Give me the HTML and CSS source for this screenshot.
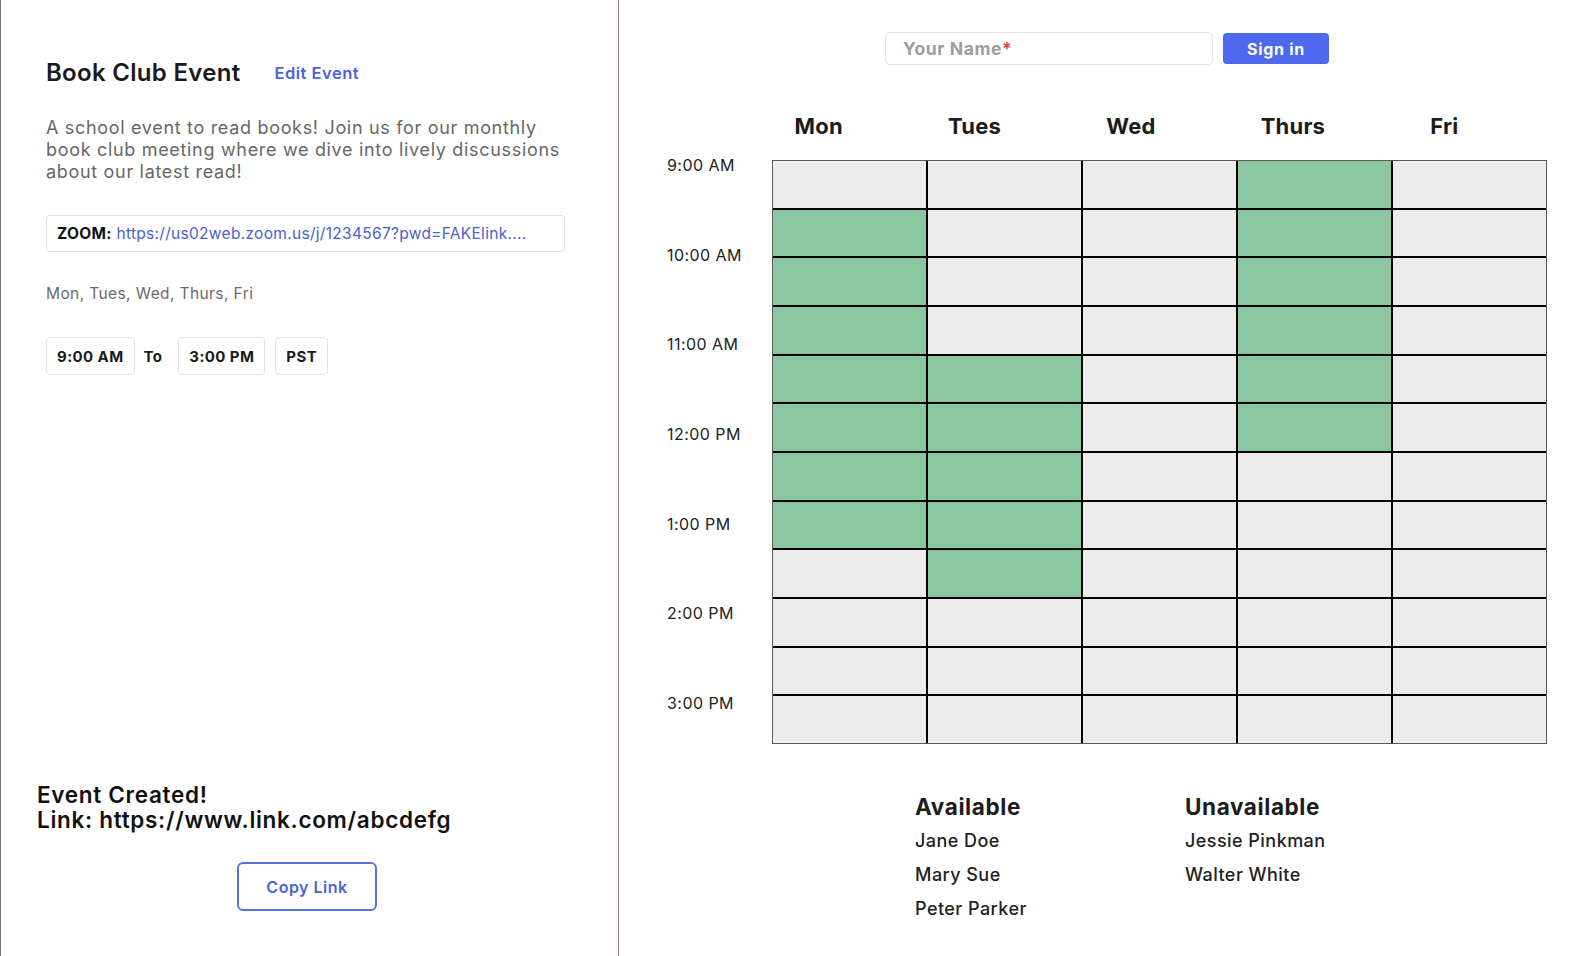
FILE: index.html
```html
<!DOCTYPE html>
<html lang="en">
<head>
<meta charset="utf-8">
<title>Book Club Event</title>
<link rel="stylesheet" href="styles.css">
</head>
<body>
<div class="page">
  <aside class="left">
    <div class="title-row">
      <h1 class="title">Book Club Event</h1>
      <a class="edit" href="#">Edit Event</a>
    </div>
    <p class="desc">A school event to read books! Join us for our monthly book club meeting where we dive into lively discussions about our latest read!</p>
    <div class="zoom"><b>ZOOM:</b>&nbsp;<a href="#">https://us02web.zoom.us/j/1234567?pwd=FAKElink....</a></div>
    <p class="days">Mon, Tues, Wed, Thurs, Fri</p>
    <div class="times">
      <span class="tbox">9:00 AM</span>
      <span class="to">To</span>
      <span class="tbox">3:00 PM</span>
      <span class="tbox">PST</span>
    </div>
    <div class="created">
      <p class="created-text">Event Created!<br>Link: https://www.link.com/abcdefg</p>
      <button class="copy">Copy Link</button>
    </div>
  </aside>
  <main class="right">
    <div class="signin">
      <div class="name-input">Your Name<span class="req">*</span></div>
      <button class="signin-btn">Sign in</button>
    </div>
    <div class="day-head">
      <span>Mon</span><span>Tues</span><span>Wed</span><span>Thurs</span><span>Fri</span>
    </div>
    <div class="schedule">
      <div class="hours">
        <span>9:00 AM</span><span>10:00 AM</span><span>11:00 AM</span><span>12:00 PM</span><span>1:00 PM</span><span>2:00 PM</span><span>3:00 PM</span>
      </div>
      <div class="grid">
        <div class="c"></div><div class="c"></div><div class="c"></div><div class="c g"></div><div class="c"></div>
        <div class="c g"></div><div class="c"></div><div class="c"></div><div class="c g"></div><div class="c"></div>
        <div class="c g"></div><div class="c"></div><div class="c"></div><div class="c g"></div><div class="c"></div>
        <div class="c g"></div><div class="c"></div><div class="c"></div><div class="c g"></div><div class="c"></div>
        <div class="c g"></div><div class="c g"></div><div class="c"></div><div class="c g"></div><div class="c"></div>
        <div class="c g"></div><div class="c g"></div><div class="c"></div><div class="c g"></div><div class="c"></div>
        <div class="c g"></div><div class="c g"></div><div class="c"></div><div class="c"></div><div class="c"></div>
        <div class="c g"></div><div class="c g"></div><div class="c"></div><div class="c"></div><div class="c"></div>
        <div class="c"></div><div class="c g"></div><div class="c"></div><div class="c"></div><div class="c"></div>
        <div class="c"></div><div class="c"></div><div class="c"></div><div class="c"></div><div class="c"></div>
        <div class="c"></div><div class="c"></div><div class="c"></div><div class="c"></div><div class="c"></div>
        <div class="c"></div><div class="c"></div><div class="c"></div><div class="c"></div><div class="c"></div>
      </div>
    </div>
    <div class="people">
      <div class="plist">
        <h2>Available</h2>
        <p>Jane Doe</p>
        <p>Mary Sue</p>
        <p>Peter Parker</p>
      </div>
      <div class="plist">
        <h2>Unavailable</h2>
        <p>Jessie Pinkman</p>
        <p>Walter White</p>
      </div>
    </div>
  </main>
</div>
</body>
</html>
```
FILE: styles.css
```css
* { box-sizing: border-box; }
html, body { margin: 0; padding: 0; background: #fff; }
body {
  font-family: Inter, "Open Sans", "Liberation Sans", sans-serif;
  color: #1c1c1c;
}
p, h1, h2 { margin: 0; }
a { text-decoration: none; }
button { font-family: inherit; cursor: pointer; }

.page {
  display: flex;
  width: 1592px;
  height: 956px;
}

/* ---------- left panel ---------- */
.left {
  width: 619px;
  flex: none;
  border-left: 1px solid #7a7a7a;
  border-right: 1px solid #a27676;
  display: flex;
  flex-direction: column;
  padding: 58px 0 45px 45px;
}
.title-row {
  display: flex;
  align-items: center;
  gap: 34px;
}
.title {
  font-size: 24px;
  line-height: 29px;
  font-weight: 600;
  color: #1a1a1a;
  letter-spacing: 0.3px;
}
.edit {
  font-size: 16.5px;
  font-weight: 600;
  letter-spacing: 0.5px;
  color: #4a63dc;
}
.desc {
  margin-top: 30px;
  width: 530px;
  font-size: 18px;
  line-height: 22px;
  letter-spacing: 0.68px;
  color: #676767;
}
.zoom {
  margin-top: 32px;
  width: 519px;
  height: 37px;
  border: 1px solid #e3e3e3;
  border-radius: 4px;
  padding: 0 10px;
  display: flex;
  align-items: center;
  font-size: 15.5px;
  letter-spacing: 0.3px;
  white-space: nowrap;
  color: #111;
}
.zoom b { font-weight: 700; }
.zoom a { color: #4a5fd2; }
.days {
  margin-top: 33px;
  font-size: 15.5px;
  line-height: 18px;
  letter-spacing: 0.4px;
  color: #6a6a6a;
}
.times {
  margin-top: 34px;
  display: flex;
  align-items: center;
  gap: 10px;
  font-size: 15px;
  font-weight: 700;
  letter-spacing: 0.4px;
  color: #1a1a1a;
}
.tbox {
  height: 38px;
  border: 1px solid #e3e3e3;
  border-radius: 4px;
  padding: 0 10px;
  display: flex;
  align-items: center;
}
.to { padding-right: 6px; margin-left: -1px; }

.created {
  margin-top: auto;
  margin-left: -9px;
  display: flex;
  flex-direction: column;
}
.created-text {
  font-size: 22.5px;
  line-height: 25px;
  font-weight: 600;
  letter-spacing: 0.7px;
  color: #111;
}
.copy {
  margin: 30px 0 0 200px;
  width: 140px;
  height: 49px;
  border: 2px solid #5a72e0;
  border-radius: 6px;
  background: #fff;
  color: #4a63dc;
  font-size: 16px;
  font-weight: 600;
  letter-spacing: 0.5px;
}

/* ---------- right panel ---------- */
.right {
  flex: 1;
  display: flex;
  flex-direction: column;
  padding: 32px 0 0 48px;
}
.signin {
  display: flex;
  gap: 10px;
  margin-left: 218px;
}
.name-input {
  width: 328px;
  height: 33px;
  border: 1px solid #e4e4e4;
  border-radius: 5px;
  padding-left: 17px;
  display: flex;
  align-items: center;
  font-size: 17.5px;
  font-weight: 700;
  letter-spacing: 0.6px;
  color: #9d9d9d;
}
.req { color: #e04848; }
.signin-btn {
  width: 106px;
  height: 31px;
  margin-top: 1px;
  border: none;
  border-radius: 4px;
  background: #4e69ef;
  color: #fff;
  font-size: 16px;
  font-weight: 700;
  letter-spacing: 0.7px;
}
.day-head {
  margin: 48px 0 0 75px;
  width: 769px;
  display: flex;
  justify-content: space-around;
  font-size: 22px;
  line-height: 27px;
  font-weight: 700;
  letter-spacing: 0.2px;
  color: #1c1c1c;
}
.schedule {
  margin-top: 15px;
  display: flex;
  align-items: flex-start;
}
.hours {
  width: 105px;
  display: flex;
  flex-direction: column;
  gap: 69.7px;
  font-size: 16px;
  line-height: 20px;
  letter-spacing: 0.45px;
  color: #222;
}
.grid {
  margin-top: 5px;
  width: 775px;
  height: 584px;
  display: grid;
  grid-template-columns: repeat(5, 1fr);
  grid-template-rows: repeat(12, 1fr);
  gap: 2px;
  background: #000;
  border: 1px solid #5a5a5a;
}
.c { background: #ececec; }
.c.g { background: #8ac69f; }

.people {
  margin: 49px 0 0 248px;
  display: flex;
}
.plist { width: 270px; }
.plist h2 {
  font-size: 22.5px;
  line-height: 27px;
  font-weight: 700;
  letter-spacing: 0.6px;
  color: #1c1c1c;
  margin-bottom: 4px;
}
.plist p {
  font-size: 18px;
  line-height: 34px;
  font-weight: 500;
  letter-spacing: 0.45px;
  color: #222;
}
```
